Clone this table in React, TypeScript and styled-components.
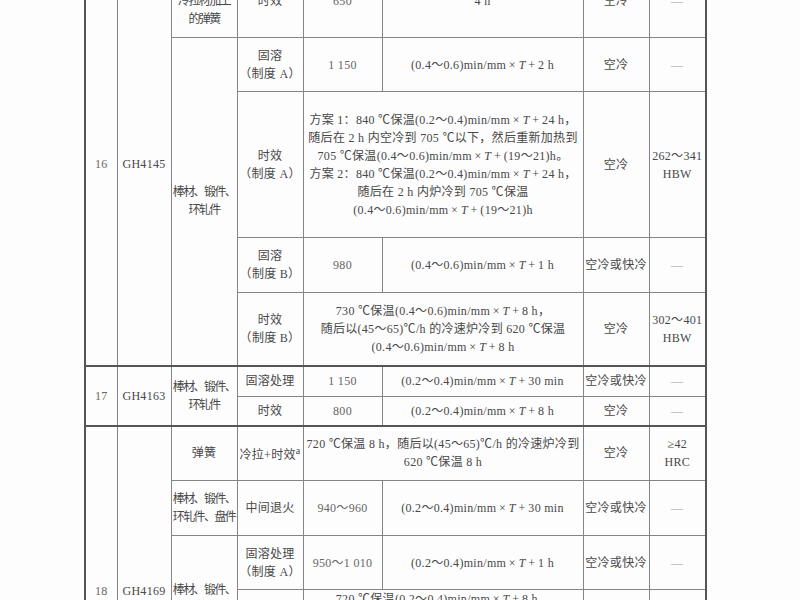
import styled, { createGlobalStyle } from 'styled-components';

const GlobalStyle = createGlobalStyle`
  html, body {
    margin: 0;
    padding: 0;
    background: #ffffff;
  }
`;

const Sheet = styled.div`
  width: 800px;
  height: 600px;
  overflow: hidden;
  background: #fdfdfd;
  padding-left: 84px;
  box-sizing: border-box;
`;

const Table = styled.table`
  margin-top: -37px;
  border-collapse: collapse;
  table-layout: fixed;
  width: 621px;
  border-left: 2px solid #555;
  border-right: 2px solid #555;
  font-family: "Liberation Serif", "Noto Sans CJK SC", serif;
  font-size: 12px;
  line-height: 18px;
  letter-spacing: 0.3px;
  color: #484848;
`;

const Col = styled.col<{ $w: number }>`
  width: ${p => p.$w}px;
`;

const Row = styled.tr<{ $h: number; $sep?: boolean }>`
  height: ${p => p.$h}px;
  ${p => p.$sep && `& > td { border-top: 2px solid #555; }`}
`;

const Cell = styled.td<{ $tight?: boolean }>`
  border: 1px solid #858585;
  padding: 0 1px;
  text-align: center;
  vertical-align: middle;
  white-space: nowrap;
  overflow: hidden;
  letter-spacing: ${p => (p.$tight ? '-1.6px' : '0.3px')};
`;

const Num = styled.span`
  color: #666;
`;

const Dash = styled.span`
  color: #999;
`;

const T = () => <i>T</i>;
// formula pieces with thin spaces round the operators, as set in the print
const X = () => <>{'\u2009×\u2009'}</>;
const P = () => <>{'\u2009+\u2009'}</>;

const widths = [32, 54, 66, 66, 79, 201, 66, 57];

export default function App() {
  return (
    <>
      <GlobalStyle />
      <Sheet>
        <Table>
          <colgroup>
            {widths.map((w, i) => <Col key={i} $w={w} />)}
          </colgroup>
          <tbody>
            <Row $h={74}>
              <Cell rowSpan={5}><Num>16</Num></Cell>
              <Cell rowSpan={5}>GH4145</Cell>
              <Cell $tight>用固溶处理<br />冷拉材加工<br />的弹簧</Cell>
              <Cell>时效</Cell>
              <Cell><Num>650</Num></Cell>
              <Cell>4 h</Cell>
              <Cell>空冷</Cell>
              <Cell><Dash>—</Dash></Cell>
            </Row>
            <Row $h={54}>
              <Cell rowSpan={4} $tight>棒材、锻件、<br />环轧件</Cell>
              <Cell>固溶<br />（制度 A）</Cell>
              <Cell><Num>1 150</Num></Cell>
              <Cell>(0.4～0.6)min/mm<X /><T /><P />2 h</Cell>
              <Cell>空冷</Cell>
              <Cell><Dash>—</Dash></Cell>
            </Row>
            <Row $h={146}>
              <Cell>时效<br />（制度 A）</Cell>
              <Cell colSpan={2}>
                方案 1：840 ℃保温(0.2～0.4)min/mm<X /><T /><P />24 h，<br />
                随后在 2 h 内空冷到 705 ℃以下，然后重新加热到<br />
                705 ℃保温(0.4～0.6)min/mm<X /><T /><P />(19～21)h。<br />
                方案 2：840 ℃保温(0.2～0.4)min/mm<X /><T /><P />24 h，<br />
                随后在 2 h 内炉冷到 705 ℃保温<br />
                (0.4～0.6)min/mm<X /><T /><P />(19～21)h
              </Cell>
              <Cell>空冷</Cell>
              <Cell>262～341<br />HBW</Cell>
            </Row>
            <Row $h={55}>
              <Cell>固溶<br />（制度 B）</Cell>
              <Cell><Num>980</Num></Cell>
              <Cell>(0.4～0.6)min/mm<X /><T /><P />1 h</Cell>
              <Cell>空冷或快冷</Cell>
              <Cell><Dash>—</Dash></Cell>
            </Row>
            <Row $h={73}>
              <Cell>时效<br />（制度 B）</Cell>
              <Cell colSpan={2}>
                730 ℃保温(0.4～0.6)min/mm<X /><T /><P />8 h，<br />
                随后以(45～65)℃/h 的冷速炉冷到 620 ℃保温<br />
                (0.4～0.6)min/mm<X /><T /><P />8 h
              </Cell>
              <Cell>空冷</Cell>
              <Cell>302～401<br />HBW</Cell>
            </Row>

            <Row $h={31} $sep>
              <Cell rowSpan={2}><Num>17</Num></Cell>
              <Cell rowSpan={2}>GH4163</Cell>
              <Cell rowSpan={2} $tight>棒材、锻件、<br />环轧件</Cell>
              <Cell>固溶处理</Cell>
              <Cell><Num>1 150</Num></Cell>
              <Cell>(0.2～0.4)min/mm<X /><T /><P />30 min</Cell>
              <Cell>空冷或快冷</Cell>
              <Cell><Dash>—</Dash></Cell>
            </Row>
            <Row $h={29}>
              <Cell>时效</Cell>
              <Cell><Num>800</Num></Cell>
              <Cell>(0.2～0.4)min/mm<X /><T /><P />8 h</Cell>
              <Cell>空冷</Cell>
              <Cell><Dash>—</Dash></Cell>
            </Row>

            <Row $h={55} $sep>
              <Cell rowSpan={5}><Num>18</Num></Cell>
              <Cell rowSpan={5}>GH4169</Cell>
              <Cell>弹簧</Cell>
              <Cell>冷拉+时效<sup>a</sup></Cell>
              <Cell colSpan={2}>
                720 ℃保温 8 h，随后以(45～65)℃/h 的冷速炉冷到<br />
                620 ℃保温 8 h
              </Cell>
              <Cell>空冷</Cell>
              <Cell>≥42<br />HRC</Cell>
            </Row>
            <Row $h={55}>
              <Cell $tight>棒材、锻件、<br />环轧件、盘件</Cell>
              <Cell>中间退火</Cell>
              <Cell><Num>940～960</Num></Cell>
              <Cell>(0.2～0.4)min/mm<X /><T /><P />30 min</Cell>
              <Cell>空冷或快冷</Cell>
              <Cell><Dash>—</Dash></Cell>
            </Row>
            <Row $h={54}>
              <Cell rowSpan={2} $tight>棒材、锻件、<br />环轧件、<br />盘件</Cell>
              <Cell>固溶处理<br />（制度 A）</Cell>
              <Cell><Num>950～1 010</Num></Cell>
              <Cell>(0.2～0.4)min/mm<X /><T /><P />1 h</Cell>
              <Cell>空冷或快冷</Cell>
              <Cell><Dash>—</Dash></Cell>
            </Row>
            <Row $h={90}>
              <Cell>时效<br />（制度 A）</Cell>
              <Cell colSpan={2}>
                720 ℃保温(0.2～0.4)min/mm<X /><T /><P />8 h，<br />
                随后以(45～65)℃/h 的冷速炉冷到 620 ℃保温<br />
                (0.2～0.4)min/mm<X /><T /><P />8 h，<br />
                或 720 ℃保温 8 h，随后炉冷到<br />
                620 ℃保温 8 h
              </Cell>
              <Cell>空冷</Cell>
              <Cell><Dash>—</Dash></Cell>
            </Row>
            <Row $h={76}>
              <Cell $tight>盘件</Cell>
              <Cell>固溶处理</Cell>
              <Cell><Num>950～980</Num></Cell>
              <Cell>(0.2～0.4)min/mm<X /><T /><P />1 h</Cell>
              <Cell>空冷</Cell>
              <Cell><Dash>—</Dash></Cell>
            </Row>
          </tbody>
        </Table>
      </Sheet>
    </>
  );
}
